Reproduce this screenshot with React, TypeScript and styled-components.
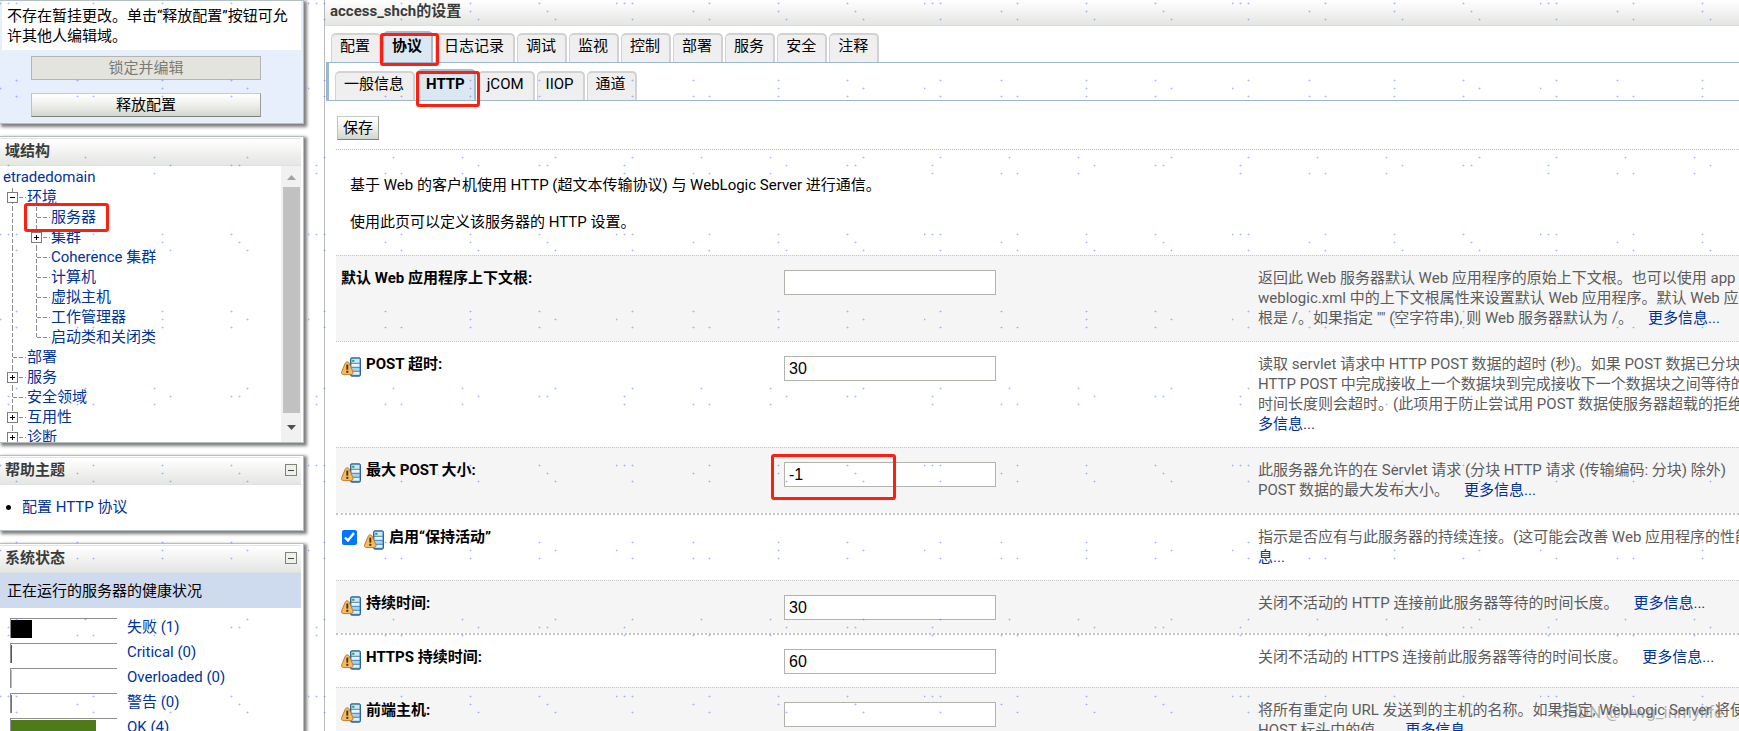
import React from "react";
import styled, { createGlobalStyle, css } from "styled-components";

const GlobalStyle = createGlobalStyle`
  * { box-sizing: border-box; }
  body {
    margin: 0;
    background: #fff;
    color: #000;
    font-family: Roboto, "Noto Sans CJK SC", sans-serif;
    font-size: 15px;
    line-height: 20px;
  }
  button, input { font-family: inherit; font-size: inherit; }
  a { color: #003399; text-decoration: none; }
`;

const Page = styled.div`
  position: relative;
  display: flex;
  height: 100vh;
  overflow: hidden;
`;

/* ---------- sidebar ---------- */

const Sidebar = styled.aside`
  flex: none;
  width: 304px;
  margin-right: 20px;
  display: flex;
  flex-direction: column;
  gap: 12px;
`;

const Panel = styled.section<{ $tinted?: boolean; $open?: boolean }>`
  flex: none;
  border: 1px solid #b4bfc2;
  border-left: 0;
  box-shadow: 2px 2px 3px 1px #7f7f7f;
  padding-right: 2px;
  background: ${(p) => (p.$tinted ? "#e7eefc" : "#fff")};
  ${(p) => p.$open && css`flex: 1 0 auto;`}
`;

const PanelHeader = styled.header`
  display: flex;
  align-items: center;
  justify-content: space-between;
  height: 28px;
  margin-top: 1px;
  padding: 0 4px 2px 5px;
  border-top: 1px solid #e3e5e5;
  border-bottom: 1px solid #dfe1df;
  background: linear-gradient(#fff, #e4e6e3);
`;

const PanelTitle = styled.h2`
  margin: 0;
  font-size: 15px;
  line-height: 20px;
  font-weight: 700;
  color: #3a3c3a;
`;

const CollapseButton = styled.button`
  display: flex;
  align-items: center;
  justify-content: center;
  width: 12px;
  height: 12px;
  padding: 0;
  border: 1px solid #7d8578;
  background: #eef0ea;
  &::before {
    content: "";
    width: 6px;
    height: 1px;
    background: #444;
  }
`;

const Notice = styled.p`
  margin: 0 0 6px 2px;
  padding: 5px 5px;
  height: 49px;
  background: #fff;
`;

const ChangeActions = styled.div`
  display: flex;
  flex-direction: column;
  gap: 13px;
  padding: 0 40px 6px 31px;
`;

const PushButton = styled.button`
  height: 24px;
  padding: 0 5px;
  line-height: 20px;
  border: 1px solid;
  border-color: #c9ccc4 #9b9d97 #7e807b #c0c2bc;
  background: linear-gradient(#fff, #f2f3ef 40%, #d3d6cf);
  color: #000;
  &:disabled {
    border: 1px solid #b4b5ae;
    background: #e3e4de;
    color: #7a7a76;
  }
`;

const TreeViewport = styled.div`
  display: flex;
  height: 276px;
`;

const Tree = styled.ul`
  flex: 1;
  min-width: 0;
  margin: 0;
  padding: 1px 0 0 3px;
  list-style: none;
  overflow: hidden;
`;

const TreeRow = styled.li`
  display: flex;
  height: 20px;
  white-space: nowrap;
`;

const BranchSvg = styled.svg`
  flex: none;
  width: 24px;
  height: 20px;
`;

const Marked = styled.span`
  position: relative;
`;

const Highlight = styled.span<{ $top: number; $right: number; $bottom: number; $left: number }>`
  position: absolute;
  z-index: 2;
  top: ${(p) => -p.$top}px;
  right: ${(p) => -p.$right}px;
  bottom: ${(p) => -p.$bottom}px;
  left: ${(p) => -p.$left}px;
  border: 3px solid #ff1f10;
  border-radius: 3px;
  pointer-events: none;
`;

const ScrollTrack = styled.div`
  flex: none;
  display: flex;
  flex-direction: column;
  width: 20px;
  padding: 0 1px 0 2px;
  background: #f1f1f1;
`;

const ScrollArrow = styled.svg`
  flex: none;
  width: 17px;
  height: 21px;
`;

const ScrollThumb = styled.div`
  height: 226px;
  background: #c1c1c1;
`;

const HelpList = styled.ul`
  margin: 0;
  padding: 12px 0 13px 22px;
`;

const StatusBand = styled.div`
  height: 35px;
  padding: 8px 7px;
  background: #cedaee;
`;

const StatusList = styled.ul`
  margin: 0;
  padding: 9px 0 0 10px;
  list-style: none;
`;

const StatusRow = styled.li`
  display: flex;
  height: 25px;
  gap: 10px;
`;

const Meter = styled.span`
  flex: none;
  width: 107px;
  height: 20px;
  margin-top: 1px;
  padding-top: 1px;
  border-top: 1px solid #8e8e90;
  border-left: 1px solid #8e8e90;
`;

const MeterFill = styled.span<{ $color: string }>`
  display: block;
  height: 18px;
  background: ${(p) => p.$color};
`;

/* ---------- main column ---------- */

const Main = styled.main`
  flex: 1;
  min-width: 0;
  overflow: hidden;
  border-left: 1px solid #b9bdbf;
`;

const TitleBar = styled.header`
  height: 26px;
  padding: 1px 5px;
  border-bottom: 1px solid #dcdedb;
  background: linear-gradient(#fff, #e4e6e3);
`;

const Title = styled.h1`
  margin: 0;
  font-size: 15px;
  line-height: 20px;
  font-weight: 700;
  color: #3a3c3a;
`;

const TabBar = styled.nav<{ $height: number }>`
  display: flex;
  align-items: flex-end;
  gap: 2px;
  height: ${(p) => p.$height}px;
  padding: 0 6px;
`;

const SubTabArea = styled.div`
  margin-left: 1px;
  border: solid #9bb7d2;
  border-width: 1px 0 1px 3px;
`;

const Tab = styled.a<{ $active?: boolean }>`
  position: relative;
  height: 29px;
  padding: 1px 9px 1px 8px;
  border: 2px solid #d2d2d2;
  border-width: 2px 2px 0 1px;
  border-radius: 5px 5px 0 0;
  background: #efefef;
  color: #000;
  white-space: nowrap;
  ${(p) =>
    p.$active &&
    css`
      height: 31px;
      padding-top: 3px;
      border-color: #a3bbd3;
      background: #dbe8f2;
      font-weight: 700;
    `}
`;

const SaveBar = styled.div`
  display: flex;
  padding: 15px 12px 9px;
`;

const Content = styled.div`
  padding-left: 11px;
`;

const Intro = styled.div`
  border-top: 1px dotted #b9b9b9;
  padding: 25px 14px 23px;
`;

const IntroLine = styled.p`
  margin: 0;
  & + & { margin-top: 17px; }
`;

const FieldRow = styled.div<{ $shaded?: boolean; $heavy?: boolean }>`
  display: grid;
  grid-template-columns: minmax(0, 448fr) minmax(0, 474fr) minmax(0, 481fr);
  align-items: start;
  border-top: ${(p) => (p.$heavy ? 2 : 1)}px dotted #c4c4c4;
  background: ${(p) => (p.$shaded ? "#f5f5f5" : "#fff")};
`;

const FieldName = styled.div`
  display: flex;
  gap: 5px;
  padding: 12px 5px;
  font-weight: 700;
`;

const InputCell = styled.div`
  display: flex;
  height: 52px;
  padding-top: 14px;
`;

const TextInput = styled.input`
  width: 212px;
  height: 25px;
  padding: 0 4px;
  border: 1px solid #b3b3ae;
  background: #fff;
  font-family: "Liberation Sans", sans-serif;
  font-size: 16px;
`;

const Tick = styled.input`
  width: 15px;
  height: 15px;
  margin: 3px 2px 0 1px;
  accent-color: #0075ff;
`;

const Description = styled.div`
  padding: 12px 0 13px;
  color: #5c5c5c;
  white-space: nowrap;
`;

const Line = styled.div`
  height: 20px;
`;

const MoreLink = styled.a<{ $spaced?: boolean }>`
  margin-left: ${(p) => (p.$spaced ? 15 : 0)}px;
`;

const RestartSvg = styled.svg`
  flex: none;
  width: 20px;
  height: 20px;
  margin-top: 3px;
`;

const SpeckleLayer = styled.svg`
  position: absolute;
  inset: 0;
  z-index: 3;
  width: 100%;
  height: 100%;
  pointer-events: none;
`;

const Credit = styled.span`
  position: absolute;
  z-index: 4;
  right: 16px;
  bottom: 9px;
  font-size: 17px;
  color: rgba(110, 110, 110, 0.5);
  pointer-events: none;
`;

type BranchKind = "rail" | "tee" | "elbow" | "plus" | "minus";

function Branch({ kind, first }: { kind: BranchKind; first?: boolean }) {
  const boxed = kind === "plus" || kind === "minus";
  return (
    <BranchSvg viewBox="0 0 24 20" shapeRendering="crispEdges" aria-hidden="true">
      <g stroke="#8a8a8a" strokeDasharray="4 2" fill="none">
        <path d={`M9.5 ${first ? 1 : 0}V${kind === "elbow" ? 10 : 20}`} />
        {kind !== "rail" && <path d="M10 10.5H23" />}
      </g>
      {boxed && (
        <>
          <rect x="4.5" y="5.5" width="10" height="10" fill="#fff" stroke="#7c7c7c" />
          <path d={kind === "plus" ? "M7 10.5H12M9.5 8V13" : "M7 10.5H12"} stroke="#000" />
        </>
      )}
    </BranchSvg>
  );
}

function RestartIcon() {
  return (
    <RestartSvg viewBox="0 0 20 20" aria-hidden="true">
      <rect x="9.5" y="0.8" width="10" height="18.4" rx="1.4" fill="#3f86bf" stroke="#2a6496" />
      <rect x="10.5" y="1.8" width="8" height="4" fill="#cfe8f8" />
      <rect x="10.5" y="6.8" width="8" height="3" fill="#e9f6fd" />
      <rect x="10.5" y="10.8" width="8" height="3" fill="#a5d0ee" />
      <rect x="10.5" y="14.8" width="8" height="3" fill="#e0f1fb" />
      <rect x="11.2" y="2.8" width="2.2" height="2" fill="#2f9e3c" />
      <path
        d="M6.2 4.8C7.4 4.8 8 5.6 8.5 6.8L11.8 14.4C12.5 16.4 11.6 17.6 9.8 17.6H2.7C.9 17.6 0 16.4.8 14.4L4 6.8C4.5 5.6 5.1 4.8 6.2 4.8Z"
        fill="#f6b95c"
        stroke="#c27a2c"
      />
      <path d="M6.3 7.6V12.6" stroke="#45300f" strokeWidth="1.9" />
      <rect x="5.3" y="13.8" width="2" height="2" fill="#45300f" />
    </RestartSvg>
  );
}

const speckles: [number, number[]][] = [
  [3, [93, 162, 231, 0, 8, 16]],
  [11, [77, 162, 239]],
  [19, [93, 170, 247, 16]],
  [80, [16, 77, 162, 231]],
  [88, [0, 162, 247]],
  [96, [77, 93, 162, 231, 16]],
  [157, [85, 154, 247, 16]],
  [165, [170, 231, 239, 8]],
  [173, [77, 93, 154, 8]],
];

function Speckles() {
  return (
    <SpeckleLayer aria-hidden="true" shapeRendering="crispEdges">
      <defs>
        <pattern id="speckles" width="308" height="231" patternUnits="userSpaceOnUse">
          {speckles.flatMap(([y, xs]) =>
            xs.map((x) => (
              <g key={`${x}-${y}`} fill="#4a72f5">
                <rect x={x - 1} y={y} width="3" height="1" opacity="0.22" />
                <rect x={x} y={y - 1} width="1" height="3" opacity="0.18" />
                <rect x={x} y={y} width="1" height="1" opacity="0.2" />
              </g>
            ))
          )}
        </pattern>
      </defs>
      <rect width="100%" height="100%" fill="url(#speckles)" />
    </SpeckleLayer>
  );
}

interface TreeNode {
  text: string;
  guides: BranchKind[];
  marked?: boolean;
}

const treeNodes: TreeNode[] = [
  { text: "etradedomain", guides: [] },
  { text: "环境", guides: ["minus"] },
  { text: "服务器", guides: ["rail", "tee"], marked: true },
  { text: "集群", guides: ["rail", "plus"] },
  { text: "Coherence 集群", guides: ["rail", "tee"] },
  { text: "计算机", guides: ["rail", "tee"] },
  { text: "虚拟主机", guides: ["rail", "tee"] },
  { text: "工作管理器", guides: ["rail", "tee"] },
  { text: "启动类和关闭类", guides: ["rail", "elbow"] },
  { text: "部署", guides: ["tee"] },
  { text: "服务", guides: ["plus"] },
  { text: "安全领域", guides: ["tee"] },
  { text: "互用性", guides: ["plus"] },
  { text: "诊断", guides: ["plus"] },
];

const statuses = [
  { text: "失败 (1)", color: "#000", share: 20 },
  { text: "Critical (0)", color: "#e02020", share: 1 },
  { text: "Overloaded (0)", color: "#f0b840", share: 1 },
  { text: "警告 (0)", color: "#2f8f9f", share: 1 },
  { text: "OK (4)", color: "#4f7a18", share: 80 },
];

const tabs = ["配置", "协议", "日志记录", "调试", "监视", "控制", "部署", "服务", "安全", "注释"];
const subTabs = ["一般信息", "HTTP", "jCOM", "IIOP", "通道"];

interface Field {
  id: string;
  label: string;
  value?: string;
  check?: boolean;
  restart?: boolean;
  heavy?: boolean;
  marked?: boolean;
  lines: string[];
  more: string;
}

const fields: Field[] = [
  {
    id: "context-root",
    label: "默认 Web 应用程序上下文根:",
    value: "",
    lines: [
      "返回此 Web 服务器默认 Web 应用程序的原始上下文根。也可以使用 app",
      "weblogic.xml 中的上下文根属性来设置默认 Web 应用程序。默认 Web 应",
      '根是 /。如果指定 "" (空字符串), 则 Web 服务器默认为 /。',
    ],
    more: "更多信息...",
  },
  {
    id: "post-timeout",
    label: "POST 超时:",
    value: "30",
    restart: true,
    lines: [
      "读取 servlet 请求中 HTTP POST 数据的超时 (秒)。如果 POST 数据已分块",
      "HTTP POST 中完成接收上一个数据块到完成接收下一个数据块之间等待的",
      "时间长度则会超时。(此项用于防止尝试用 POST 数据使服务器超载的拒绝",
      "",
    ],
    more: "多信息...",
  },
  {
    id: "max-post-size",
    label: "最大 POST 大小:",
    value: "-1",
    restart: true,
    marked: true,
    lines: [
      "此服务器允许的在 Servlet 请求 (分块 HTTP 请求 (传输编码: 分块) 除外)",
      "POST 数据的最大发布大小。",
    ],
    more: "更多信息...",
  },
  {
    id: "keep-alive",
    label: "启用“保持活动”",
    check: true,
    restart: true,
    heavy: true,
    lines: ["指示是否应有与此服务器的持续连接。(这可能会改善 Web 应用程序的性能", ""],
    more: "息...",
  },
  {
    id: "duration",
    label: "持续时间:",
    value: "30",
    restart: true,
    lines: ["关闭不活动的 HTTP 连接前此服务器等待的时间长度。"],
    more: "更多信息...",
  },
  {
    id: "https-duration",
    label: "HTTPS 持续时间:",
    value: "60",
    restart: true,
    heavy: true,
    lines: ["关闭不活动的 HTTPS 连接前此服务器等待的时间长度。"],
    more: "更多信息...",
  },
  {
    id: "frontend-host",
    label: "前端主机:",
    value: "",
    restart: true,
    lines: ["将所有重定向 URL 发送到的主机的名称。如果指定, WebLogic Server 将使", "HOST 标头中的值。"],
    more: "更多信息...",
  },
];

function FieldLine({ field, shaded }: { field: Field; shaded: boolean }) {
  const last = field.lines.length - 1;
  return (
    <FieldRow $shaded={shaded} $heavy={field.heavy}>
      <FieldName>
        {field.check && <Tick type="checkbox" id={field.id} defaultChecked />}
        {field.restart && <RestartIcon />}
        <label htmlFor={field.id}>{field.label}</label>
      </FieldName>
      {field.check ? (
        <span />
      ) : (
        <InputCell>
          <Marked>
            <TextInput id={field.id} type="text" defaultValue={field.value} />
            {field.marked && <Highlight $top={8} $right={-100} $bottom={0} $left={13} />}
          </Marked>
        </InputCell>
      )}
      <Description>
        {field.lines.map((text, i) => (
          <Line key={i}>
            {text}
            {i === last && (
              <MoreLink href="#" $spaced={text !== ""}>
                {field.more}
              </MoreLink>
            )}
          </Line>
        ))}
      </Description>
    </FieldRow>
  );
}

export default function App() {
  return (
    <>
      <GlobalStyle />
      <Page>
        <Sidebar>
          <Panel $tinted>
            <Notice>不存在暂挂更改。单击“释放配置”按钮可允许其他人编辑域。</Notice>
            <ChangeActions>
              <PushButton disabled>锁定并编辑</PushButton>
              <PushButton>释放配置</PushButton>
            </ChangeActions>
          </Panel>

          <Panel>
            <PanelHeader>
              <PanelTitle>域结构</PanelTitle>
            </PanelHeader>
            <TreeViewport>
              <Tree>
                {treeNodes.map((node, i) => (
                  <TreeRow key={node.text}>
                    {node.guides.map((kind, g) => (
                      <Branch key={g} kind={kind} first={i === 1} />
                    ))}
                    <Marked>
                      <a href="#">{node.text}</a>
                      {node.marked && <Highlight $top={4} $right={13} $bottom={5} $left={27} />}
                    </Marked>
                  </TreeRow>
                ))}
              </Tree>
              <ScrollTrack>
                <ScrollArrow viewBox="0 0 17 21">
                  <path d="M4 14L8.500 9L13 14Z" fill="#a3a3a3" />
                </ScrollArrow>
                <ScrollThumb />
                <ScrollArrow viewBox="0 0 17 21">
                  <path d="M4 12L8.500 17L13 12Z" fill="#505050" />
                </ScrollArrow>
              </ScrollTrack>
            </TreeViewport>
          </Panel>

          <Panel>
            <PanelHeader>
              <PanelTitle>帮助主题</PanelTitle>
              <CollapseButton aria-label="帮助主题" />
            </PanelHeader>
            <HelpList>
              <li>
                <a href="#">配置 HTTP 协议</a>
              </li>
            </HelpList>
          </Panel>

          <Panel $open>
            <PanelHeader>
              <PanelTitle>系统状态</PanelTitle>
              <CollapseButton aria-label="系统状态" />
            </PanelHeader>
            <StatusBand>正在运行的服务器的健康状况</StatusBand>
            <StatusList>
              {statuses.map((s) => (
                <StatusRow key={s.text}>
                  <Meter>
                    <MeterFill $color={s.color} style={{ width: `${s.share}%` }} />
                  </Meter>
                  <a href="#">{s.text}</a>
                </StatusRow>
              ))}
            </StatusList>
          </Panel>
        </Sidebar>

        <Main>
          <TitleBar>
            <Title>access_shch的设置</Title>
          </TitleBar>
          <TabBar $height={36}>
            {tabs.map((t) => (
              <Tab key={t} href="#" $active={t === "协议"}>
                {t}
                {t === "协议" && <Highlight $top={0} $right={8} $bottom={4} $left={4} />}
              </Tab>
            ))}
          </TabBar>
          <SubTabArea>
            <TabBar $height={37}>
              {subTabs.map((t) => (
                <Tab key={t} href="#" $active={t === "HTTP"}>
                  {t}
                  {t === "HTTP" && <Highlight $top={0} $right={6} $bottom={7} $left={2} />}
                </Tab>
              ))}
            </TabBar>
          </SubTabArea>
          <SaveBar>
            <PushButton>保存</PushButton>
          </SaveBar>
          <Content>
            <Intro>
              <IntroLine>基于 Web 的客户机使用 HTTP (超文本传输协议) 与 WebLogic Server 进行通信。</IntroLine>
              <IntroLine>使用此页可以定义该服务器的 HTTP 设置。</IntroLine>
            </Intro>
            {fields.map((f, i) => (
              <FieldLine key={f.id} field={f} shaded={i % 2 === 0} />
            ))}
          </Content>
        </Main>
        <Speckles />
        <Credit>CSDN @wwg_inmylife</Credit>
      </Page>
    </>
  );
}
